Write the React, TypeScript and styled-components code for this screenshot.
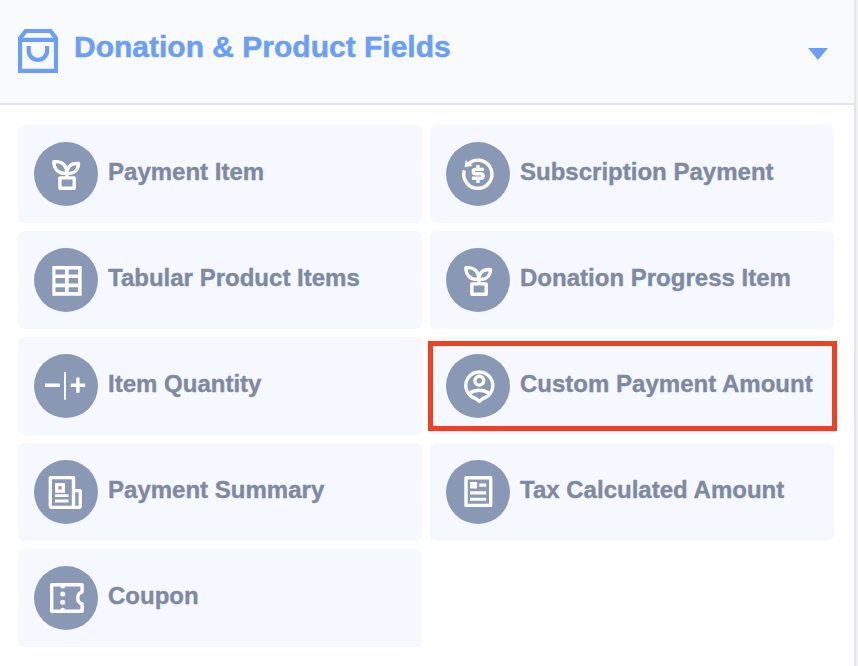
import React from "react";
import styled, { createGlobalStyle } from "styled-components";

const GlobalStyle = createGlobalStyle`
  *, *::before, *::after { box-sizing: border-box; }
  body {
    margin: 0;
    background: #f1f1f1;
    font-family: "Liberation Sans", Arial, sans-serif;
  }
`;

const Panel = styled.section`
  width: 856px;
  height: 666px;
  overflow: hidden;
  background: #ffffff;
  border-right: 2px solid #e3e6ef;
`;

const Header = styled.header`
  display: flex;
  align-items: flex-start;
  height: 105px;
  padding: 29px 26px 0 18px;
  background: #f9fafc;
  border-bottom: 2px solid #e3e6ef;
  color: #6b9ef6;
`;

const Bag = styled.svg`
  flex: none;
  width: 40px;
  height: 44px;
`;

const Title = styled.h2`
  flex: 1;
  margin: 0 0 0 16px;
  font-size: 30px;
  line-height: 36px;
  font-weight: 700;
  letter-spacing: 0;
  -webkit-text-stroke: 0.5px currentColor;
  white-space: nowrap;
`;

const Caret = styled.svg`
  flex: none;
  width: 20px;
  height: 12px;
  margin-top: 19px;
`;

const FieldGrid = styled.div`
  display: grid;
  grid-template-columns: repeat(2, 404px);
  grid-auto-rows: 98px;
  gap: 8px;
  padding: 20px 18px;
`;

const Field = styled.div<{ $highlighted?: boolean }>`
  position: relative;
  display: flex;
  align-items: center;
  gap: 10px;
  padding-left: 16px;
  border-radius: 6px;
  background: #f5f8ff;

  ${({ $highlighted }) =>
    $highlighted &&
    `&::after {
      content: "";
      position: absolute;
      top: 4px;
      left: -2px;
      width: 409px;
      height: 90px;
      border: 5px solid #ee4023;
    }`}
`;

const Badge = styled.span`
  display: flex;
  flex: none;
  width: 64px;
  height: 64px;
  border-radius: 50%;
  background: #8998b4;
`;

const Glyph = styled.svg`
  width: 64px;
  height: 64px;
  fill: none;
  stroke: #ffffff;
  stroke-width: 3.4;
  stroke-linejoin: round;

  .solid {
    fill: #ffffff;
    stroke: none;
  }
`;

const Label = styled.span`
  padding-bottom: 5px;
  color: #7e89a2;
  font-size: 24px;
  line-height: 28px;
  font-weight: 700;
  letter-spacing: 0.01px;
  -webkit-text-stroke: 0.4px currentColor;
  white-space: nowrap;
`;

const plant = (
  <>
    <path d="M19.8 19.6h2.4c6.4 0 10.5 4.4 10.5 10.8v1h-1.6c-6.9 0-11.3-4.6-11.3-11.8z" />
    <path d="M44.5 21.5h-1.8c-6 0-9.7 3.8-9.7 9.9h1.8c5.9 0 9.7-4 9.7-9.9zM33 31v5" />
    <rect x="25.9" y="35.9" width="14.3" height="10.3" />
  </>
);

const recurring = (
  <>
    <path d="M18.3 28.4A14.1 14.1 0 1 0 22.5 21.7" />
    <path className="solid" d="M19.6 18.2L26.7 23.8 18.6 25.3z" />
    <path d="M37.8 27.4h-8.3a2.2 2.2 0 0 0 0 4.4h5.4a2.2 2.2 0 0 1 0 4.4H26.1M32 23v4M32 36.5V41" />
  </>
);

const table = (
  <path
    className="solid"
    fillRule="evenodd"
    d="M19 18h28q.7 0 .7.7V47q0 .7-.7.7H19q-.7 0-.7-.7V18.7q0-.7.7-.7zM21.5 21.5v5H31v-5zM34.7 21.5v5h9.4v-5zM21.5 29.9v5.7H31v-5.7zM34.7 29.9v5.7h9.4v-5.7zM21.5 39.3v4.8H31v-4.8zM34.7 39.3v4.8h9.4v-4.8z"
  />
);

const quantity = (
  <>
    <path d="M11 31.2h14.7M36.8 31.2h14.4M43.9 23.4v15.4" />
    <rect className="solid" x="30" y="18" width="1.9" height="27.7" />
  </>
);

const personPin = (
  <>
    <path d="M33.3 47.5l-3.6-3A13.5 13.5 0 1 1 36.9 44.5z" />
    <circle cx="33.3" cy="26.7" r="4.4" />
    <path d="M23.3 39.5c5.8-4.4 14.2-4.4 20 0" />
  </>
);

const newspaper = (
  <>
    <path d="M39.5 47.4V17.6H16.3v27.8q0 2 2 2h26q2 0 2-2V30.6h-6.8" />
    <path
      className="solid"
      fillRule="evenodd"
      d="M21 23h10v9.7H21zM24.4 26.3v3.2h3.2v-3.2zM21 34.2h13.5v2.9H21zM21 39.5h13.5v3H21z"
    />
  </>
);

const invoice = (
  <>
    <rect x="20" y="17.7" width="24.7" height="27.7" />
    <path
      className="solid"
      d="M24 22h7v6.5h-7zM33.3 23.6h6.9v3.2h-6.9zM24 31.3h16.2v3.2H24zM24 37.7h16.2v3.1H24z"
    />
  </>
);

const ticket = (
  <>
    <path d="M17.7 18.7h30.4v7.2a6.3 6.3 0 0 0 0 12v7.4H17.7z" />
    <circle className="solid" cx="28.7" cy="28" r="2.5" />
    <circle className="solid" cx="28.7" cy="36.2" r="2.5" />
    <circle className="solid" cx="28.7" cy="20" r="2.5" />
    <circle className="solid" cx="28.7" cy="44.3" r="2.5" />
  </>
);

const fields = [
  { label: "Payment Item", glyph: plant },
  { label: "Subscription Payment", glyph: recurring },
  { label: "Tabular Product Items", glyph: table },
  { label: "Donation Progress Item", glyph: plant },
  { label: "Item Quantity", glyph: quantity },
  { label: "Custom Payment Amount", glyph: personPin, highlighted: true },
  { label: "Payment Summary", glyph: newspaper },
  { label: "Tax Calculated Amount", glyph: invoice },
  { label: "Coupon", glyph: ticket },
];

export default function App() {
  return (
    <>
      <GlobalStyle />
      <Panel>
        <Header>
          <Bag viewBox="0 0 40 44" fill="none" stroke="currentColor" strokeWidth="4.2">
            <path d="M2 10.9V41.9H38V10.9zM2 10.5V9.2L7.8 2H32.4L38 9.2V10.5M10.7 17v4.7a9.2 9.2 0 0 0 18.4 0V17" />
          </Bag>
          <Title>Donation &amp; Product Fields</Title>
          <Caret viewBox="0 0 20 12" fill="currentColor">
            <path d="M0 0h20L10 12z" />
          </Caret>
        </Header>
        <FieldGrid>
          {fields.map(({ label, glyph, highlighted }) => (
            <Field key={label} $highlighted={highlighted}>
              <Badge>
                <Glyph viewBox="0 0 64 64">{glyph}</Glyph>
              </Badge>
              <Label>{label}</Label>
            </Field>
          ))}
        </FieldGrid>
      </Panel>
    </>
  );
}
